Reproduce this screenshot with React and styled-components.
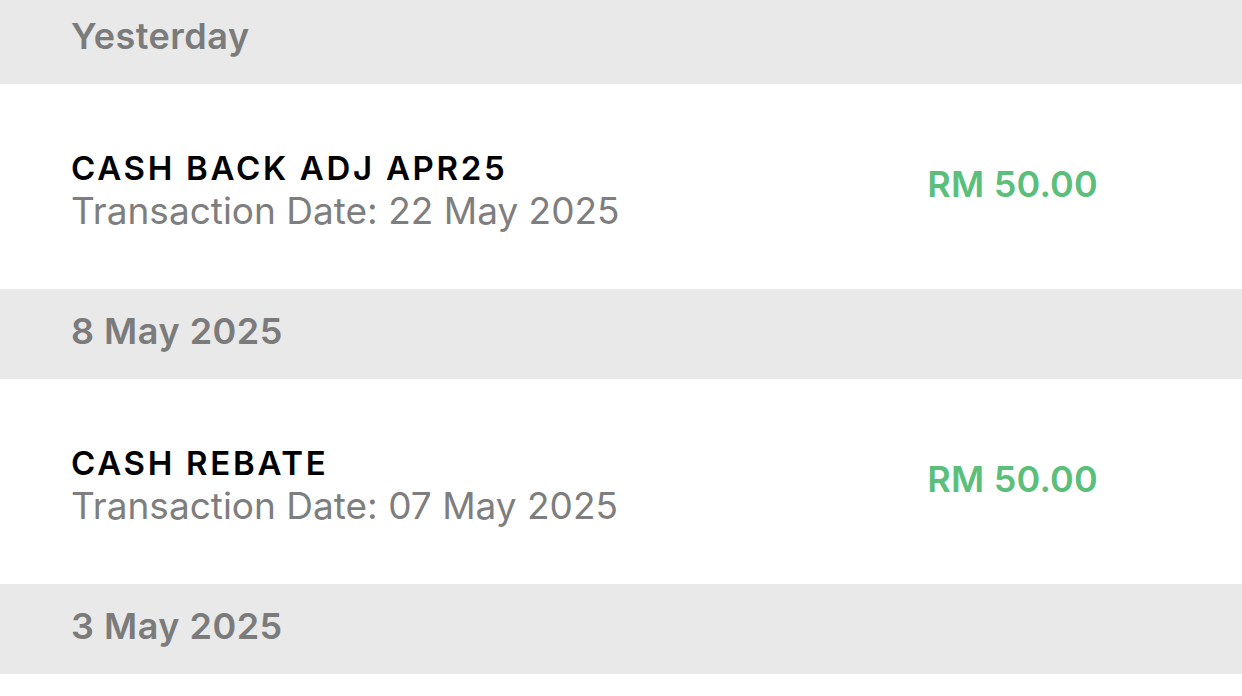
import React from 'react'
import styled, {createGlobalStyle} from 'styled-components'

const GlobalStyle = createGlobalStyle`
  html, body {
    margin: 0;
    padding: 0;
    background: #ffffff;
  }
  body {
    font-family: Inter, "Noto Sans", sans-serif;
    -webkit-font-smoothing: antialiased;
  }
`

const groups = [
  {
    label: 'Yesterday',
    items: [{title: 'CASH BACK ADJ APR25', date: '22 May 2025', amount: 'RM 50.00'}],
  },
  {
    label: '8 May 2025',
    items: [{title: 'CASH REBATE', date: '07 May 2025', amount: 'RM 50.00'}],
  },
  {
    label: '3 May 2025',
    items: [],
  },
]

const App = () => (
  <>
    <GlobalStyle />
    <Viewport>
      <List>
        {groups.map(group => (
          <React.Fragment key={group.label}>
            <SectionHeader>
              <SectionLabel>{group.label}</SectionLabel>
            </SectionHeader>
            {group.items.map(item => (
              <TxRow key={item.title}>
                <TxInfo>
                  <TxTitle>{item.title}</TxTitle>
                  <TxDate>Transaction Date: {item.date}</TxDate>
                </TxInfo>
                <TxAmount>{item.amount}</TxAmount>
              </TxRow>
            ))}
          </React.Fragment>
        ))}
      </List>
    </Viewport>
  </>
)

const Viewport = styled.div`
  width: 1242px;
  height: 696px;
  overflow: hidden;
  background: #ffffff;
`

// list is scrolled up a little, so the first header is cut at the top
const List = styled.div`
  display: flex;
  flex-direction: column;
  margin-top: -6px;
`

const SectionHeader = styled.div`
  display: flex;
  align-items: center;
  box-sizing: border-box;
  height: 90px;
  padding: 0 71px 7px;
  background: #e9e9e9;
`

const SectionLabel = styled.span`
  font-size: 36px;
  line-height: 44px;
  font-weight: 600;
  color: #7b7b7b;
  letter-spacing: 0.5px;
`

const TxRow = styled.div`
  display: flex;
  align-items: center;
  justify-content: space-between;
  box-sizing: border-box;
  height: 205px;
  padding: 0 144px 0 71px;
  background: #ffffff;
`

const TxInfo = styled.div`
  display: flex;
  flex-direction: column;
  padding-top: 8px;
`

const TxTitle = styled.span`
  font-size: 33px;
  line-height: 40px;
  font-weight: 600;
  color: #000000;
  letter-spacing: 2.7px;
`

const TxDate = styled.span`
  font-size: 37px;
  line-height: 46px;
  font-weight: 400;
  color: #7e7e7e;
`

const TxAmount = styled.span`
  font-size: 36px;
  line-height: 44px;
  padding-bottom: 5px;
  font-weight: 600;
  color: #5bbf7b;
  letter-spacing: 0.2px;
`

export default App
